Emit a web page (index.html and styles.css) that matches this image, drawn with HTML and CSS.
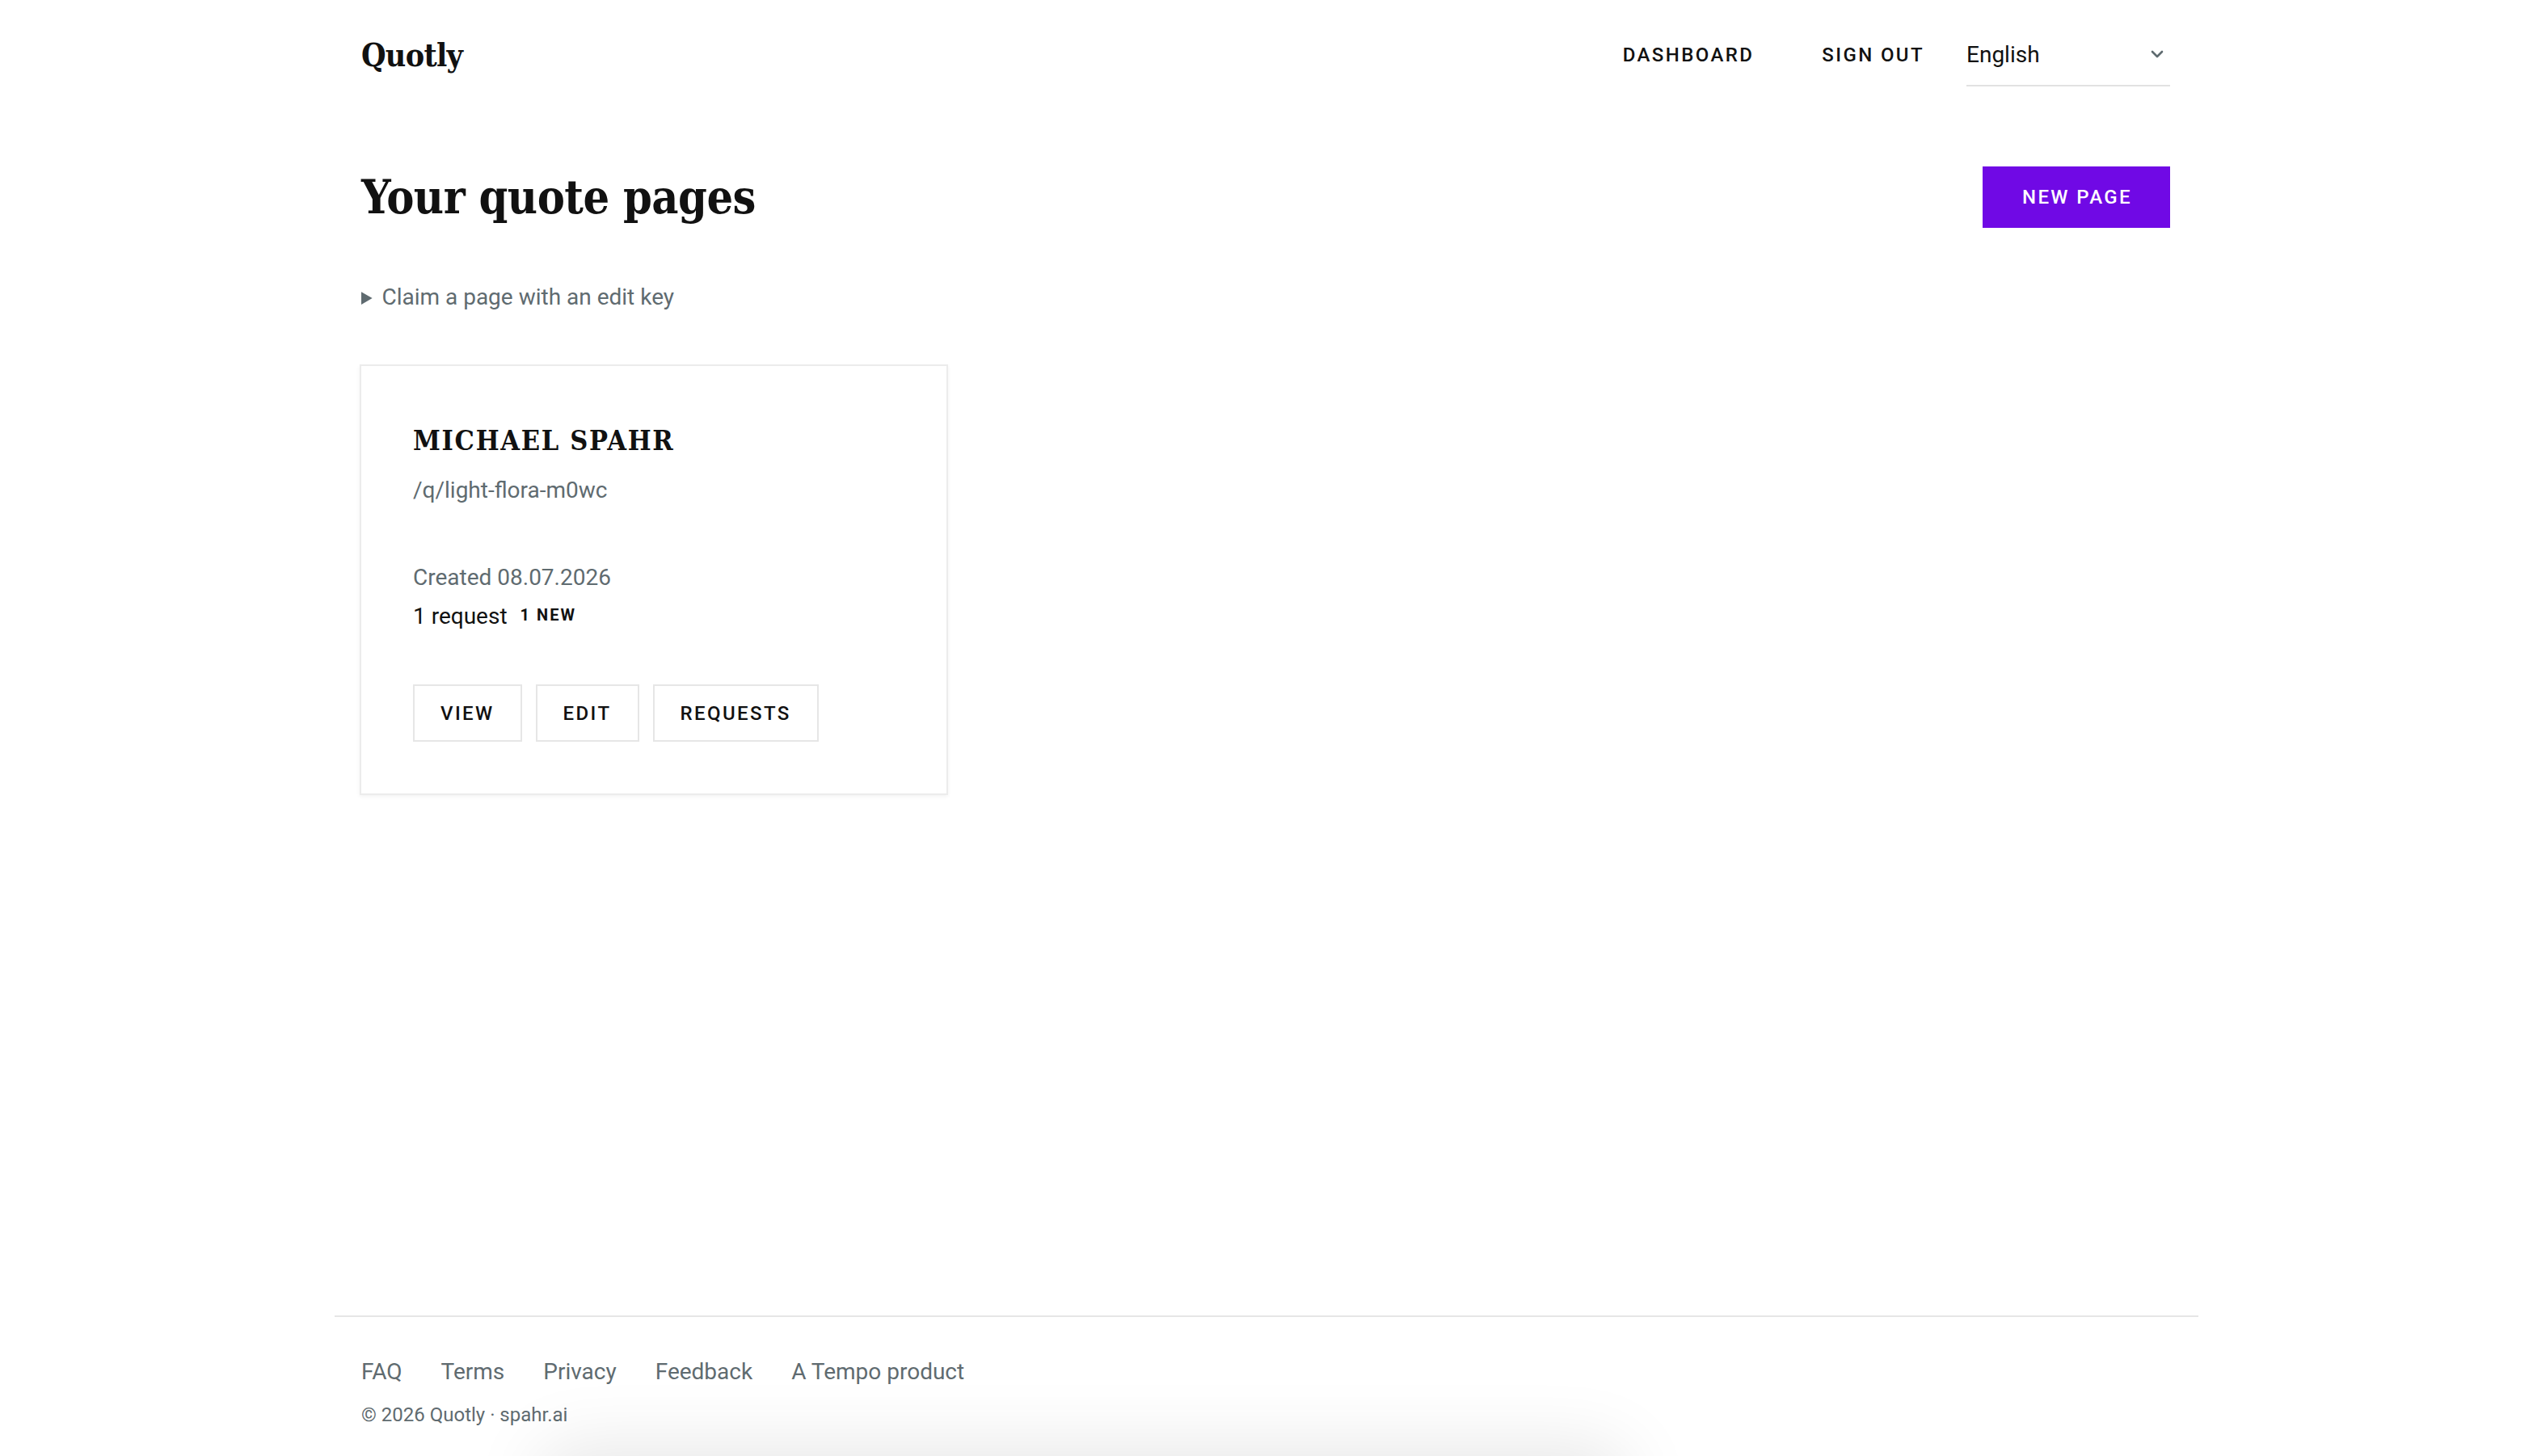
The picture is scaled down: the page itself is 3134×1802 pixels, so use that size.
FILE: index.html
```html
<!DOCTYPE html>
<html lang="en">
<head>
<meta charset="utf-8">
<title>Quotly – Your quote pages</title>
<link rel="stylesheet" href="styles.css">
</head>
<body>
<div class="page">
  <header class="site-header">
    <div class="container header-inner">
      <a class="brand" href="#">Quotly</a>
      <nav class="nav">
        <a class="nav-link nav-link--dashboard" href="#">DASHBOARD</a>
        <a class="nav-link" href="#">SIGN OUT</a>
        <div class="lang-select">
          <span class="lang-value">English</span>
          <svg class="chevron" width="16" height="10" viewBox="0 0 16 10" aria-hidden="true"><path d="M2 2 L8 8 L14 2" fill="none" stroke="#5f6b70" stroke-width="2.6" stroke-linecap="round" stroke-linejoin="round"/></svg>
        </div>
      </nav>
    </div>
  </header>

  <main class="container main">
    <div class="title-row">
      <h1 class="page-title">Your quote pages</h1>
      <button class="btn-primary" type="button">NEW PAGE</button>
    </div>

    <details class="claim">
      <summary>Claim a page with an edit key</summary>
    </details>

    <div class="cards">
      <article class="card">
        <h2 class="card-title">MICHAEL SPAHR</h2>
        <p class="card-path">/q/light-flora-m0wc</p>
        <p class="card-created">Created 08.07.2026</p>
        <p class="card-requests">1 request <span class="badge">1 NEW</span></p>
        <div class="card-actions">
          <a class="btn-outline" href="#">VIEW</a>
          <a class="btn-outline" href="#">EDIT</a>
          <a class="btn-outline" href="#">REQUESTS</a>
        </div>
      </article>
    </div>
  </main>

  <footer class="site-footer">
    <nav class="footer-links">
      <a href="#">FAQ</a>
      <a href="#">Terms</a>
      <a href="#">Privacy</a>
      <a href="#">Feedback</a>
      <a href="#">A Tempo product</a>
    </nav>
    <p class="copyright">© 2026 Quotly · spahr.ai</p>
  </footer>
</div>
<div class="toast-shadow" aria-hidden="true"></div>
</body>
</html>
```

FILE: styles.css
```css
* { box-sizing: border-box; }

html, body {
  margin: 0;
  padding: 0;
  background: #ffffff;
}

body {
  font-family: Roboto, "Liberation Sans", sans-serif;
  color: #111111;
  overflow: hidden;
}

a { color: inherit; text-decoration: none; }

.page {
  min-height: 100vh;
  display: flex;
  flex-direction: column;
}

.container {
  width: 2238px;
  margin-left: calc(50% - 1120px);
}

/* Header */
.header-inner {
  height: 136px;
  display: flex;
  align-items: center;
  justify-content: space-between;
}

.brand {
  font-family: "DejaVu Serif Condensed", "DejaVu Serif", serif;
  font-stretch: condensed;
  font-weight: 700;
  font-size: 39px;
  letter-spacing: -0.7px;
  color: #111;
}

.nav {
  display: flex;
  align-items: center;
}

.nav-link {
  font-size: 24px;
  font-weight: 500;
  letter-spacing: 0.1em;
  color: #111;
}

.nav-link--dashboard { margin-right: 84px; }

.lang-select {
  margin-left: 52px;
  width: 252px;
  height: 78px;
  display: flex;
  align-items: center;
  justify-content: space-between;
  border-bottom: 2px solid #e2e2e2;
  padding-right: 8px;
}

.lang-value {
  font-size: 28px;
  color: #111;
}

.chevron { display: block; }

/* Main */
.main {
  flex: 1;
  padding-top: 70px;
}

.title-row {
  display: flex;
  align-items: center;
  justify-content: space-between;
  height: 76px;
}

.page-title {
  margin: 0;
  font-family: "DejaVu Serif Condensed", "DejaVu Serif", serif;
  font-stretch: condensed;
  font-weight: 700;
  font-size: 57px;
  letter-spacing: -0.5px;
  line-height: 76px;
  color: #111;
}

.btn-primary {
  width: 232px;
  height: 76px;
  border: 0;
  background: #7009e5;
  color: #ffffff;
  font-family: Roboto, "Liberation Sans", sans-serif;
  font-size: 24px;
  font-weight: 500;
  letter-spacing: 0.1em;
  padding: 0 0 0 2px;
}

.claim {
  margin-top: 66px;
  font-size: 28px;
  line-height: 40px;
  color: #5f6b70;
}

.claim summary { cursor: pointer; }
.claim summary::marker { font-size: 24px; }

.cards {
  margin-top: 62px;
  display: flex;
}

.card {
  width: 728px;
  margin-left: -2px;
  border: 2px solid #ececec;
  box-shadow: 0 2px 5px rgba(0, 0, 0, 0.05);
  padding: 64px;
  background: #fff;
}

.card-title {
  margin: 0;
  font-family: "DejaVu Serif Condensed", "DejaVu Serif", serif;
  font-stretch: condensed;
  font-weight: 700;
  font-size: 34px;
  letter-spacing: 0.05em;
  line-height: 56px;
  color: #111;
}

.card-path {
  margin: 14px 0 0;
  font-size: 28px;
  line-height: 40px;
  color: #5f6b70;
}

.card-created {
  margin: 68px 0 0;
  font-size: 28px;
  line-height: 40px;
  color: #5f6b70;
}

.card-requests {
  margin: 8px 0 0;
  font-size: 28px;
  line-height: 40px;
  color: #111;
  display: flex;
  align-items: center;
}

.badge {
  margin-left: 16px;
  font-size: 20px;
  font-weight: 700;
  letter-spacing: 0.1em;
  color: #111;
  position: relative;
  top: -2px;
}

.card-actions {
  margin-top: 64px;
  display: flex;
  gap: 17px;
}

.btn-outline {
  height: 71px;
  padding: 0 32px;
  display: inline-flex;
  align-items: center;
  justify-content: center;
  border: 2px solid #e6e6e6;
  font-size: 24px;
  font-weight: 500;
  letter-spacing: 0.1em;
  color: #111;
}

/* Footer */
.site-footer {
  width: 2306px;
  margin-left: calc(50% - 1153px);
  border-top: 2px solid #e6e6e6;
  padding: 48px 32px 34px 33px;
}

.footer-links {
  display: flex;
  gap: 48px;
  font-size: 28px;
  line-height: 40px;
  color: #5f6b70;
}

.copyright {
  margin: 16px 0 0;
  font-size: 24px;
  line-height: 34px;
  color: #5f6b70;
}

.toast-shadow {
  position: fixed;
  left: 680px;
  width: 1320px;
  bottom: -120px;
  height: 120px;
  border-radius: 16px;
  background: #fff;
  box-shadow: 0 0 90px 10px rgba(0, 0, 0, 0.10);
}
```
